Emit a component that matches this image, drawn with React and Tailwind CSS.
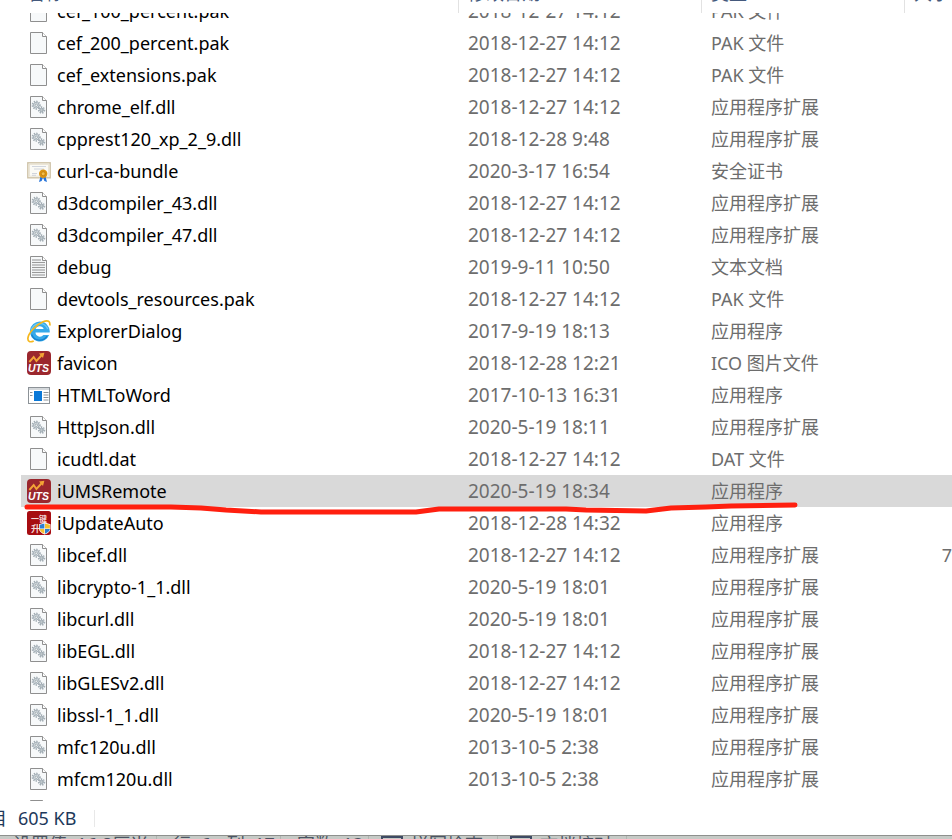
import React from "react";

const FILES = [
  ["cef_100_percent.pak", "2018-12-27 14:12", "PAK 文件", "page"],
  ["cef_200_percent.pak", "2018-12-27 14:12", "PAK 文件", "page"],
  ["cef_extensions.pak", "2018-12-27 14:12", "PAK 文件", "page"],
  ["chrome_elf.dll", "2018-12-27 14:12", "应用程序扩展", "dll"],
  ["cpprest120_xp_2_9.dll", "2018-12-28 9:48", "应用程序扩展", "dll"],
  ["curl-ca-bundle", "2020-3-17 16:54", "安全证书", "cert"],
  ["d3dcompiler_43.dll", "2018-12-27 14:12", "应用程序扩展", "dll"],
  ["d3dcompiler_47.dll", "2018-12-27 14:12", "应用程序扩展", "dll"],
  ["debug", "2019-9-11 10:50", "文本文档", "text"],
  ["devtools_resources.pak", "2018-12-27 14:12", "PAK 文件", "page"],
  ["ExplorerDialog", "2017-9-19 18:13", "应用程序", "ie"],
  ["favicon", "2018-12-28 12:21", "ICO 图片文件", "uts"],
  ["HTMLToWord", "2017-10-13 16:31", "应用程序", "exe"],
  ["HttpJson.dll", "2020-5-19 18:11", "应用程序扩展", "dll"],
  ["icudtl.dat", "2018-12-27 14:12", "DAT 文件", "page"],
  ["iUMSRemote", "2020-5-19 18:34", "应用程序", "uts"],
  ["iUpdateAuto", "2018-12-28 14:32", "应用程序", "update"],
  ["libcef.dll", "2018-12-27 14:12", "应用程序扩展", "dll", "7"],
  ["libcrypto-1_1.dll", "2020-5-19 18:01", "应用程序扩展", "dll"],
  ["libcurl.dll", "2020-5-19 18:01", "应用程序扩展", "dll"],
  ["libEGL.dll", "2018-12-27 14:12", "应用程序扩展", "dll"],
  ["libGLESv2.dll", "2018-12-27 14:12", "应用程序扩展", "dll"],
  ["libssl-1_1.dll", "2020-5-19 18:01", "应用程序扩展", "dll"],
  ["mfc120u.dll", "2013-10-5 2:38", "应用程序扩展", "dll"],
  ["mfcm120u.dll", "2013-10-5 2:38", "应用程序扩展", "dll"],
  ["", "", "", "page"],
];

const SELECTED = "iUMSRemote";

function Sheet({ children }) {
  return (
    <>
      <path d="M3.5 1.5h12l4 4v17h-16z" fill="#f7f9fa" stroke="#8f8f8f" />
      <path d="M15.5 1.5v4h4" fill="#fff" stroke="#8f8f8f" />
      {children}
    </>
  );
}

function Gear({ cx, cy, r }) {
  return (
    <>
      <circle cx={cx} cy={cy} r={r} fill="none" stroke="#a3aeb5" strokeWidth="1.6" strokeDasharray="1.4 1.1" />
      <circle cx={cx} cy={cy} r={r - 1} fill="#e4eaed" stroke="#93a0a8" strokeWidth="0.8" />
      <circle cx={cx} cy={cy} r={r / 3} fill="#fff" stroke="#87949c" strokeWidth="0.8" />
    </>
  );
}

const TEXT_LINES = [5, 7.5, 10, 12.5, 15, 17.5, 20];

const ICONS = {
  page: <Sheet />,
  dll: (
    <Sheet>
      <Gear cx={9.2} cy={10.2} r={3.8} />
      <Gear cx={14.6} cy={15} r={2.9} />
    </Sheet>
  ),
  text: (
    <Sheet>
      {TEXT_LINES.map((y) => (
        <path key={y} d={y < 7 ? `M5 ${y}h9` : `M5 ${y}h13`} stroke="#9a9a9a" strokeWidth="1.1" />
      ))}
    </Sheet>
  ),
  cert: (
    <>
      <rect x="0.8" y="3.8" width="22.4" height="15" fill="#fbfaf5" stroke="#cfc3a8" strokeWidth="1.4" />
      <rect x="2.5" y="5.5" width="19" height="11.6" fill="none" stroke="#e6e0d0" strokeWidth="0.8" />
      <path d="M5 7.5h14M7 10h10M5 14.5h5M5 16.3h4" stroke="#c6cbd6" strokeWidth="0.8" />
      <path d="M13.5 17.5l-1.5 5.5 2.6-1 1.5-3.5zM18.5 17.5l1.5 5.5-2.6-1-1.4-3.5z" fill="#2673d9" />
      <circle cx="16.2" cy="14.8" r="4.2" fill="#dc9412" />
      <circle cx="16.2" cy="14.8" r="2" fill="#f3bd48" stroke="#b97708" strokeWidth="0.7" />
    </>
  ),
  ie: (
    <>
      <path
        d="M12.8 2.6a9.9 9.9 0 1 0 9.3 13.3h-5.7a4.4 4.4 0 0 1-7.9-2.3h14.2a9.9 9.9 0 0 0-9.9-11zM8.6 10a4.3 4.3 0 0 1 8.1 0z"
        fill="#36a9ea"
        fillRule="evenodd"
      />
      <path d="M4.3 12a8.6 8.6 0 0 1 16.5-2" fill="none" stroke="#6cc9f5" strokeWidth="1.5" />
      <path d="M4.6 15.5a8.7 8.7 0 0 0 15.5 1.7" fill="none" stroke="#1683cf" strokeWidth="1.4" />
      <path d="M22.8 6.5C23.4 2.5 21.2.6 16 2.8 8.7 5.9 1.4 14.2.9 19.2c-.3 3.5 2.2 4.4 5.8 2.7" fill="none" stroke="#f6b81d" strokeWidth="1.7" />
    </>
  ),
  uts: (
    <>
      <rect width="24" height="24" rx="4" fill="#9b272d" />
      <text x="1" y="20.5" fontSize="10.5" fontWeight="700" fontStyle="italic" fill="#fff" className="font-['Liberation_Sans',sans-serif]">UTS</text>
      <path d="M2.3 11l4.4-5 2.7 4 5.5-6" fill="none" stroke="#f3a536" strokeWidth="1.9" />
      <path d="M12 2.6l5.4-.8-1.4 5.2z" fill="#f3a536" />
    </>
  ),
  exe: (
    <>
      <rect x="1.5" y="4.5" width="21" height="16" fill="#fff" stroke="#8c9297" />
      <path d="M2 6h20" stroke="#d4d8db" strokeWidth="2" />
      <rect x="7" y="8" width="8" height="10" fill="#0a78d7" />
      <path d="M3 9.5h2.5M3 12.5h2.5M16.5 9.5h5M16.5 12h5M16.5 14.5h5M16.5 17h5" stroke="#8c9297" />
    </>
  ),
  update: (
    <>
      <rect width="24" height="24" rx="2.5" fill="#a70d12" />
      <text x="4" y="10.5" fontSize="8" fontWeight="700" fill="#f2dada" className="font-['Noto_Sans_CJK_SC',sans-serif]">一键</text>
      <text x="4" y="20.5" fontSize="9" fontWeight="700" fill="#f2dada" className="font-['Noto_Sans_CJK_SC',sans-serif]">升</text>
      <path d="M17.7 11.5l5.8 1.7v4.3c0 2.8-2.3 4.7-5.8 6-3.5-1.3-5.7-3.2-5.7-6v-4.3z" fill="#fff" />
      <path d="M17.4 12.4v5h-4.7v-3.7zM18 18h4.9c-.3 2-2.2 3.5-4.9 4.8z" fill="#2c7fd3" />
      <path d="M18 12.4v5h4.9v-3.7zM17.4 18h-4.7c.3 2 2 3.5 4.7 4.8z" fill="#f5c02e" />
    </>
  ),
};

function FileIcon({ kind }) {
  return (
    <svg viewBox="0 0 24 24" className="size-6 shrink-0" aria-hidden="true">
      {ICONS[kind]}
    </svg>
  );
}

function Underline() {
  return (
    <svg viewBox="0 0 780 14" className="pointer-events-none absolute top-[27px] left-0 h-[14px] w-[780px]" aria-hidden="true">
      <path
        d="M6 5H150L180 6L205 8L240 10H395L418 7H545L565 8L625 9L650 6L685 5L710 4L774 3"
        fill="none"
        stroke="#ff1f0f"
        strokeWidth="5"
        strokeLinecap="round"
        strokeLinejoin="round"
      />
    </svg>
  );
}

function Columns() {
  return (
    <colgroup>
      <col />
      <col className="w-[243px]" />
      <col className="w-[203px]" />
      <col className="w-12" />
    </colgroup>
  );
}

function HeaderStrip() {
  const cell = "border-r border-[#e2e2e2] text-left";
  return (
    <div className="flex h-[13px] shrink-0 items-end overflow-hidden pl-[21px] text-[#44597c]">
      <div className={`${cell} h-8 flex-1 pl-[6px]`}>
        <button className="block h-6 leading-6">名称</button>
      </div>
      <div className={`${cell} h-8 w-[243px] pl-[9px]`}>
        <button className="block h-6 leading-6">修改日期</button>
      </div>
      <div className={`${cell} h-8 w-[203px] pl-[9px]`}>
        <button className="block h-6 leading-6">类型</button>
      </div>
      <div className="h-8 w-[47px] overflow-hidden pl-[9px]">
        <button className="block h-6 leading-6 whitespace-nowrap">大小</button>
      </div>
    </div>
  );
}

function FileTable() {
  return (
    <div className="flex min-h-0 flex-1 flex-col overflow-hidden pl-[21px]">
      <table className="-mt-[18px] w-full table-fixed border-collapse leading-8 whitespace-nowrap">
        <Columns />
        <tbody>
          {FILES.map(([name, date, type, icon, size], i) => (
            <tr key={i} className={name === SELECTED ? "h-8 bg-[#d9d9d9]" : "h-8"}>
              <td className="p-0">
                <div className="relative flex h-8 items-center gap-[6px] pl-[6px] text-black">
                  <FileIcon kind={icon} />
                  <span>{name}</span>
                  {name === SELECTED && <Underline />}
                </div>
              </td>
              <td className="p-0 pl-[10px] text-[19px] text-[#6d6d6d]">{date}</td>
              <td className="p-0 pl-[10px] text-[#6d6d6d]">{type}</td>
              <td className="p-0 text-right text-[#6d6d6d]">{size}</td>
            </tr>
          ))}
        </tbody>
      </table>
    </div>
  );
}

function StatusBar() {
  return (
    <footer className="flex h-[34px] shrink-0 items-center text-[#1e395b]">
      <span className="flex w-[7px] justify-end overflow-hidden">目</span>
      <span className="ml-[11px]">605 KB</span>
      <span className="ml-[18px] h-[17px] w-px bg-[#e8e8e8]" />
    </footer>
  );
}

function EditorStrip() {
  const item = "border-r border-[#b0b4b0] h-6";
  return (
    <div className="flex h-1 shrink-0 items-start overflow-hidden border-t border-[#8e908e] bg-[#c6cac6] pl-[13px] leading-6 whitespace-nowrap text-[#4c5563]">
      <span className={`${item} -mt-1 w-36`}>设置值: 16.8厘米</span>
      <span className={`${item} -mt-1 flex w-[124px] gap-4 pl-4`}>
        <span>行: 6</span>
        <span>列: 17</span>
      </span>
      <span className={`${item} -mt-1 w-[88px] pl-4`}>字数: 13</span>
      <label className={`${item} -mt-1 flex w-[129px] gap-2 pl-3`}>
        <input type="checkbox" className="mt-1 size-[22px] appearance-none border-2 border-[#3e4a63]" />
        拼写检查
      </label>
      <label className={`${item} -mt-1 flex w-[129px] gap-2 pl-3`}>
        <input type="checkbox" className="mt-1 size-[22px] appearance-none border-2 border-[#3e4a63]" />
        文档校对
      </label>
    </div>
  );
}

export default function App() {
  return (
    <main className="flex h-screen flex-col overflow-hidden bg-white font-['Noto_Sans','Noto_Sans_CJK_SC',sans-serif] text-[18px]">
      <HeaderStrip />
      <FileTable />
      <StatusBar />
      <EditorStrip />
    </main>
  );
}
